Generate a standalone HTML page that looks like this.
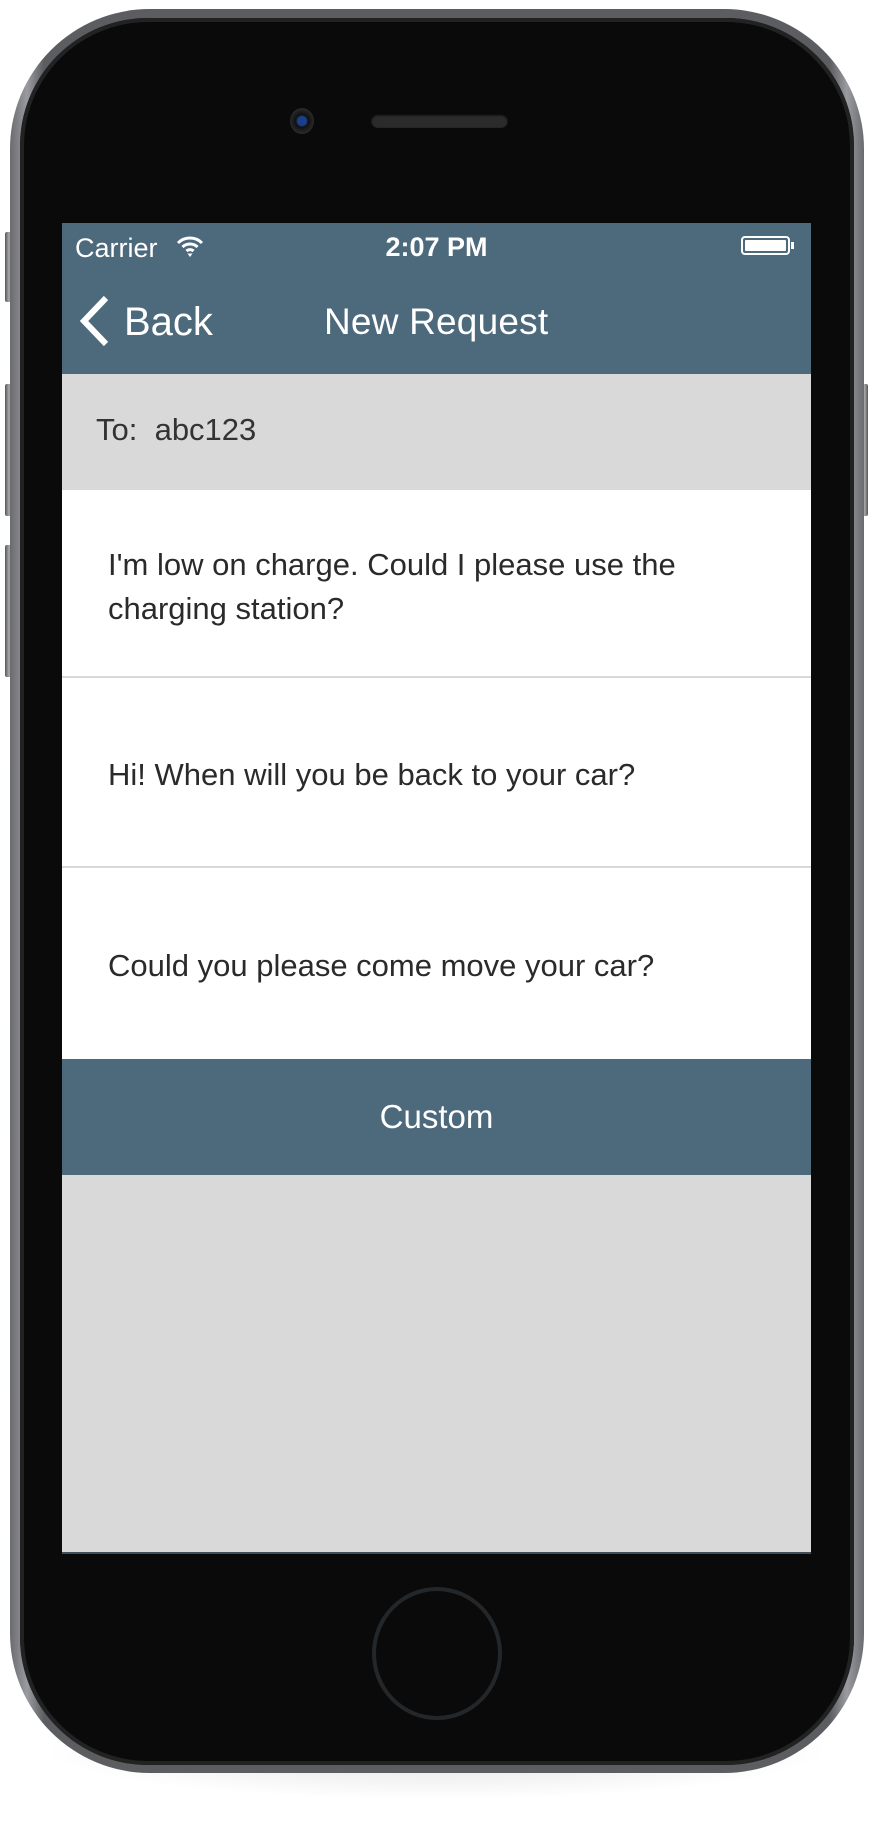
<!DOCTYPE html>
<html><head><style>
body{margin:0;width:873px;height:1821px;background:#fff;position:relative;overflow:hidden;font-family:"Liberation Sans",sans-serif}
.shadow{position:absolute;left:40px;top:1700px;width:793px;height:100px;border-radius:50%;background:radial-gradient(ellipse,rgba(0,0,0,.12),rgba(0,0,0,0) 70%)}
.btn{position:absolute;left:5px;width:8px;background:linear-gradient(90deg,#555,#aaa,#666);border-radius:2px}
.btnr{position:absolute;left:861px;width:7px;background:linear-gradient(90deg,#666,#aaa,#555);border-radius:2px}
.body{position:absolute;left:10px;top:9px;width:854px;height:1764px;border-radius:140px;background:linear-gradient(90deg,#6a6b6f,#9a9ba0 2%,#5c5d61 4%,#5c5d61 96%,#9a9ba0 98%,#6a6b6f)}
.bezel{position:absolute;left:20px;top:18px;width:834px;height:1747px;border-radius:128px;background:#0a0a0a;box-shadow:inset 0 0 0 4px #222}
.screen{position:absolute;left:62px;top:223px;width:749px;height:1329px;background:#d9d9d9;border-bottom:2px solid #3d4f5c}
.cam{position:absolute;left:290px;top:108px;width:24px;height:26px;border-radius:50%;background:radial-gradient(circle,#1b3f8a 0 25%,#111 35%,#2a2a2a 70%)}
.spk{position:absolute;left:371px;top:114px;width:137px;height:14px;border-radius:7px;background:#2b2b2b;box-shadow:inset 0 1px 2px #000}
.home{position:absolute;left:372px;top:1587px;width:130px;height:133px;border-radius:50%;border:4px solid #24272a;box-sizing:border-box}
.nav{position:absolute;left:0;top:0;width:749px;height:151px;background:#4d6a7d;color:#fff}
.row{position:absolute;left:0;width:749px;background:#fff;color:#2a2a2a;font-size:31px;line-height:44px;box-sizing:border-box;padding-left:46px;display:flex;align-items:center}
</style></head><body>
<div class="shadow"></div>
<div class="btn" style="top:232px;height:70px"></div>
<div class="btn" style="top:384px;height:132px"></div>
<div class="btn" style="top:545px;height:132px"></div>
<div class="btnr" style="top:384px;height:132px"></div>
<div class="body"></div>
<div class="bezel"></div>
<div class="cam"></div>
<div class="spk"></div>
<div class="home"></div>
<div class="screen">
 <div class="nav">
  <div style="position:absolute;left:13px;top:10px;font-size:27px">Carrier</div>
  <svg style="position:absolute;left:113px;top:11px" width="30" height="24" viewBox="0 0 30 24"><path d="M3 9a17 17 0 0 1 24 0M7.5 13a11 11 0 0 1 15 0M11.5 17a5 5 0 0 1 7 0" stroke="#fff" stroke-width="3" fill="none"/><path d="M12.5 19.5l2.5 3.5 2.5-3.5z" fill="#fff"/></svg>
  <div style="position:absolute;left:0;width:749px;top:9px;text-align:center;font-size:27px;font-weight:bold">2:07 PM</div>
  <div style="position:absolute;left:679px;top:13px;width:49px;height:19px;border:2px solid #fff;border-radius:4px;box-sizing:border-box;padding:2px"><div style="background:#fff;width:100%;height:100%;border-radius:1px"></div></div>
  <div style="position:absolute;left:729px;top:19px;width:3px;height:7px;background:#fff"></div>
  <svg style="position:absolute;left:16px;top:72px" width="32" height="52" viewBox="0 0 32 52"><path d="M28 3L6 26l22 23" stroke="#fff" stroke-width="6" fill="none"/></svg>
  <div style="position:absolute;left:62px;top:77px;font-size:40px">Back</div>
  <div style="position:absolute;left:262px;top:78px;font-size:37px;font-weight:300;letter-spacing:.2px">New Request</div>
 </div>
 <div style="position:absolute;left:34px;top:189px;font-size:31px;color:#333">To:&nbsp; abc123</div>
 <div class="row" style="top:267px;height:186px"><div style="margin-top:8px">I'm low on charge. Could I please use the<br>charging station?</div></div>
 <div class="row" style="top:455px;height:188px"><div style="margin-top:6px">Hi! When will you be back to your car?</div></div>
 <div class="row" style="top:645px;height:191px"><div style="margin-top:4px">Could you please come move your car?</div></div>
 <div style="position:absolute;left:0;top:836px;width:749px;height:116px;background:#4d6a7d;color:#fff;font-size:33px;display:flex;align-items:center;justify-content:center">Custom</div>
</div>
</body></html>
